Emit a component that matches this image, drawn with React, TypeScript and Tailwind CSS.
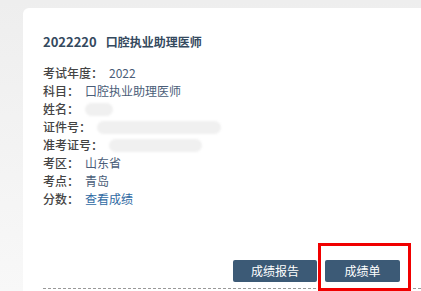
import React from 'react';

const font = { fontFamily: '"Noto Sans CJK SC", "Microsoft YaHei", sans-serif' };

interface InfoRowProps {
    label: string;
    children?: React.ReactNode;
}

const InfoRow: React.FC<InfoRowProps> = ({ label, children }) => (
    <div className="flex items-center h-[18px] text-[12px] leading-[18px]">
        <span className="text-[#444] font-medium">{label}</span>
        <span className="ml-[6px] text-[#4a5d78] flex items-center">{children}</span>
    </div>
);

const Blur: React.FC<{ w: string }> = ({ w }) => (
    <span className={`inline-block h-[13px] rounded-full bg-[#f0f0f0] blur-[1px] ${w}`} />
);

export default function App() {
    return (
        <div
            className="relative w-[421px] h-[291px] overflow-hidden bg-linear-to-b from-[#eeeeee] to-[#f8f8f8] pl-[23px] pt-[8px] flex"
            style={font}
        >
            <div className="flex-1 bg-white rounded-tl-[6px] pl-[20px] pr-[21px] pt-[24px] flex flex-col">
                <h1 className="text-[12px] leading-[20px] font-bold text-[#34495e] flex">
                    <span className="text-[13px]">2022220</span>
                    <span className="ml-[9px]">口腔执业助理医师</span>
                </h1>

                <div className="mt-[12px] flex flex-col">
                    <InfoRow label="考试年度：">2022</InfoRow>
                    <InfoRow label="科目：">口腔执业助理医师</InfoRow>
                    <InfoRow label="姓名："><Blur w="w-[28px]" /></InfoRow>
                    <InfoRow label="证件号："><Blur w="w-[124px]" /></InfoRow>
                    <InfoRow label="准考证号："><Blur w="w-[93px]" /></InfoRow>
                    <InfoRow label="考区：">山东省</InfoRow>
                    <InfoRow label="考点：">青岛</InfoRow>
                    <InfoRow label="分数：">
                        <span className="text-[#2f6aa3] cursor-pointer">查看成绩</span>
                    </InfoRow>
                </div>

                <div className="mt-[52px] flex justify-end gap-[8px]">
                    <button className="w-[84px] h-[22px] rounded-[2px] bg-[#3c5a76] text-white text-[12px] leading-[22px]">
                        成绩报告
                    </button>
                    <button className="w-[75px] h-[22px] rounded-[2px] bg-[#3c5a76] text-white text-[12px] leading-[22px]">
                        成绩单
                    </button>
                </div>

                <div className="mt-[6px] -mr-[21px] border-t border-dashed border-[#999]" />
            </div>

            {/* annotation box */}
            <div className="absolute left-[318px] top-[243px] w-[93px] h-[48px] border-[3px] border-[#f00000]" />
        </div>
    );
}
